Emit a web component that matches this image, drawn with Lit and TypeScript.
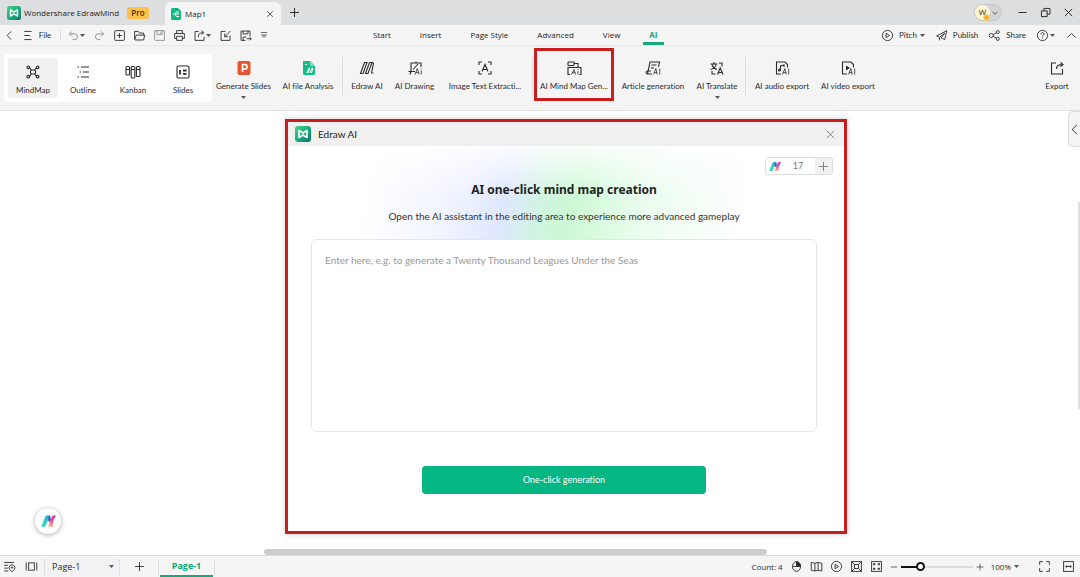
import { LitElement, html, svg, css, nothing } from "lit";
import { customElement, property } from "lit/decorators.js";

const icons: Record<string, unknown> = {
  back: svg`<path d="M10 3 5 8l5 5"/>`,
  menu: svg`<path d="M4 3h9M4 8h7M4 13h9"/>`,
  undo: svg`<path d="M6 3 3 6l3 3M3 6h6.500a3.500 3.500 0 0 1 0 7H7"/>`,
  redo: svg`<path d="m10 3 3 3-3 3M13 6H6.500a3.500 3.500 0 0 0 0 7H9"/>`,
  add: svg`<rect x="2" y="2" width="12" height="12" rx="1"/><path d="M8 5v6M5 8h6"/>`,
  folder: svg`<path d="M2 13V3h4.500l1.500 2h5v2.500M2 13l2-5.500h10.500L13 13.500H2.500"/>`,
  save: svg`<path d="M2 2h12v12H3l-1-1zM5 2v5h6V2M9 4v1.500"/>`,
  print: svg`<path d="M4.500 5.500V2h7v3.500M4.500 11.500H2v-6h12v6h-2.500M4.500 9h7v5h-7z"/>`,
  exportBox: svg`<path d="M7 3H2.500v11h11V9.500M6.500 10c0-4 2-5.500 6-5.500M10.500 2l3 2.500-3 2.500"/>`,
  importBox: svg`<path d="M8 3H2.500v11h11V8M14 2.500 7 9.500M7 5.500v4h4"/>`,
  saveAs: svg`<path d="M8 14H2.500V2.500h11V9M5 2.500V6h6V2.500M5 14v-4h4M9.500 12H15M13 10l2 2-2 2"/>`,
  more: svg`<path d="M3 4h10M4 8 8 11.500 12 8z"/>`,
  play: svg`<circle cx="8" cy="8" r="6.300"/><path d="M6.300 5.300v5.400L10.500 8z"/>`,
  publish: svg`<path d="M14.500 2 2 8.500l3.500 1.800L12 5l-4.500 6 4.500 2zM5.500 10.500V14"/>`,
  share: svg`<circle cx="4" cy="8" r="2.500"/><circle cx="12" cy="3.800" r="1.900"/><circle cx="12" cy="12.200" r="1.900"/><path d="m6.300 7 4-2.300M6.300 9l4 2.300"/>`,
  help: svg`<circle cx="8" cy="8" r="6.300"/><path d="M6 6.500C6 4 10 4 10 6.300 10 7.800 8 7.500 8 9.200M8 10.500v1.300"/>`,
  up: svg`<path d="m3 10.500 5-5 5 5"/>`,
  down: svg`<path d="m4 6 4 4 4-4"/>`,
  minus: svg`<path d="M3 8h10"/>`,
  plus: svg`<path d="M8 2.500v11M2.500 8h11"/>`,
  restore: svg`<path d="M3 6h7v7H3zM6 6V3h7.500v7H10"/>`,
  close: svg`<path d="m3.500 3.500 9 9M12.500 3.500l-9 9"/>`,
  mindmap: svg`<rect x="5.500" y="6" width="5" height="4" rx="1"/><circle cx="3.300" cy="3.300" r="1.300"/><circle cx="12.700" cy="3.300" r="1.300"/><circle cx="3.300" cy="12.700" r="1.300"/><circle cx="12.700" cy="12.700" r="1.300"/><path d="M4.500 3.500 6.500 6M11.500 3.500 9.500 6M4.500 12.500 6.500 10M11.500 12.500 9.500 10"/>`,
  outline: svg`<path d="M2.500 3h1.500M6 3h8M4.500 8H6M8 8h6M2.500 13h1.500M6 13h8"/>`,
  kanban: svg`<rect x="1" y="2.500" width="3.600" height="8.500" rx="1"/><rect x="6.200" y="2.500" width="3.600" height="11.500" rx="1"/><rect x="11.400" y="2.500" width="3.600" height="10" rx="1"/><path d="M1 5.500h3.500M6.200 5.500h3.500M11.400 5.500H15"/>`,
  slides: svg`<rect x="2" y="2" width="12" height="12" rx="1.500"/><path stroke-width="1.800" d="M5 6v4.500M8 6.500h3.500M8 9.800h3.500"/>`,
  edraw: svg`<path d="M1.500 13.500 5.500 2.500H8L4 13.500zM6.500 13.500 10.500 2.500H13L9 13.500zM13 2.500l1.500.5-2 10.500M14 12.500v1"/>`,
  drawing: svg`<path d="M8 11.500H4V3h10v4M9 1.500V3M1.500 11.500H4L3 14.500M6 9.500l5-5.500"/><path class="ai" d="m8 14.500 2.300-6 1.700 6M8.800 12.600h2.800M14.200 10.500v4M14.200 8.500v1"/>`,
  extract: svg`<path d="M5 2H2v3M11 2h3v3M5 14H2v-3M11 14h3v-3M5 11.500 8 4.500l3 7M6 9.500h4"/>`,
  mapgen: svg`<rect x="2" y="2" width="6" height="3.500" rx=".5"/><path d="M8 3.500h4v4M4 14.500H2v-7h13v7h-1.500"/><path class="ai" d="m5.500 14.500 2.500-5 1.500 5M6.500 12.800h2.800M12 11v3.500M12 9v1"/>`,
  article: svg`<path d="M7 14H2.500L5 2h9.500l-1 5M2.500 14c-2 0-1.500-3 0-3H6M6.500 5h5M6 8h3"/><path class="ai" d="m8.500 14.500 2.300-6 1.500 6M9.300 12.600h2.800M14.700 8.500v6"/>`,
  translate: svg`<path d="M1.500 4h7M5 2v2M3 4.500c.5 2 2.500 4 5 5M7 4.500C6.500 7 4 9 1.500 9.500M10 3h3v3.500M3 11v3h3.500M8.500 14.500 11.200 8l2.800 6.500M9.500 12.500H13"/>`,
  audio: svg`<path d="M7 14H2.500V2H11l2.500 2.500v3M6.500 10V6L10 5v2"/><circle cx="5.500" cy="10" r="1"/><path class="ai" d="m8.500 14.500 2.300-6 1.500 6M9.300 12.600h2.800M14.700 8.500v6"/>`,
  video: svg`<path d="M7 14H2.500V2H11l2.500 2.500v3"/><path fill="currentColor" stroke="none" d="M6 5.500v5L10 8z"/><path class="ai" d="m8.500 14.500 2.300-6 1.500 6M9.300 12.600h2.800M14.700 8.500v6"/>`,
  exportBig: svg`<path d="M7 3H2.500v11h11V9M7.500 9c0-3 1.500-4.500 6-4.500M11.500 2.500l2.500 2-2.500 2"/>`,
  left: svg`<path d="m11 2.500-6 5.500 6 5.500"/>`,
  find: svg`<path d="M1.500 3h12M1.500 6.500h4.500M1.500 10h4.500M1.500 13.500h5"/><path d="M11 14.500 8 11.500a3.600 3.600 0 1 1 6 0z"/><circle cx="11" cy="9.300" r=".9"/>`,
  frame: svg`<rect x="4.500" y="3.500" width="7" height="9"/><path d="M1.500 3v10M14.500 3v10"/>`,
  mouse: svg`<ellipse cx="8" cy="8" rx="5" ry="6"/><path fill="currentColor" d="M8 2v6h5C13 5 11 2 8 2z"/><path d="M3 8h5"/>`,
  book: svg`<path d="M1.500 3 6 4l4-1 4.500 1v9.500l-4.500-1-4 1-4.500-1zM6 4v9.500M10 3v9.500"/>`,
  fitBox: svg`<rect x="2" y="2" width="12" height="12"/><rect x="5.500" y="5.500" width="5" height="5"/><path d="m2 2 3.500 3.500M14 2l-3.500 3.500M2 14l3.500-3.500M14 14l-3.500-3.500"/>`,
  expandBox: svg`<rect x="2" y="2" width="12" height="12"/><path stroke-width="1.800" d="M4.800 6.500V4.800h1.700M9.500 4.800h1.700v1.700M4.800 9.500v1.700h1.700M9.500 11.200h1.700V9.500"/>`,
  full: svg`<path d="M6 2H2v4M10 2h4v4M6 14H2v-4M10 14h4v-4"/>`,
  width: svg`<rect x="2" y="2" width="12" height="12"/><path d="M4.500 8h7M6 6.500 4.500 8 6 9.500M10 6.500 11.500 8 10 9.500"/>`,
};

const icon = (name: string, cls = "") => html`<svg class="icon ${cls}" viewBox="0 0 16 16" aria-hidden="true">${icons[name]}</svg>`;
const caret = html`<svg class="caret" viewBox="0 0 5 3" aria-hidden="true"><path d="M0 0h5L2.500 3z"/></svg>`;

const logo = html`<svg class="logo" viewBox="0 0 16 16" aria-hidden="true">
  <defs><linearGradient id="lg" x1="0" y1="0" x2="1" y2="1"><stop offset="0" stop-color="#43cf88"/><stop offset=".5" stop-color="#1fae7d"/><stop offset="1" stop-color="#07736f"/></linearGradient></defs>
  <rect width="16" height="16" rx="3" fill="url(#lg)"/>
  <path d="M4 4.500v7l4-2.500 4 2.500v-7L8 7z" fill="none" stroke="#fff" stroke-width="1.600" stroke-linejoin="round"/>
</svg>`;

const spark = html`<svg class="spark" viewBox="0 0 16 12" aria-hidden="true">
  <defs>
    <linearGradient id="sa" x1="1" y1="0" x2="0" y2="1"><stop offset="0" stop-color="#2c8fd8"/><stop offset=".5" stop-color="#30cfc8"/><stop offset="1" stop-color="#3fe0c0"/></linearGradient>
    <linearGradient id="sb" x1=".7" y1="0" x2=".3" y2="1"><stop offset="0" stop-color="#dd2fa4"/><stop offset=".5" stop-color="#e8508f"/><stop offset="1" stop-color="#fbb98c"/></linearGradient>
  </defs>
  <path d="M0 12 4.500 1.500Q5 0 7 0h2.500L5 11q-.5 1-1.500 1z" fill="url(#sa)"/>
  <path d="M7.500 12 11.500 1.500Q12 0 13.500 0H16l-3 6-.5 6z" fill="url(#sb)"/>
  <path d="M7.500 3.500 9 0h.8L10.500 4 9.500 7 7.800 6z" fill="#4458b8"/>
</svg>`;

const base = css`
  * { box-sizing: border-box; }
  button, select, input, textarea { font: inherit; color: inherit; margin: 0; padding: 0; border: 0; background: none; }
  button { display: flex; align-items: center; justify-content: center; white-space: nowrap; }
  .icon { width: 13px; height: 13px; flex: none; fill: none; stroke: currentColor; stroke-width: 1.1; }
  .icon.small { width: 10px; height: 10px; }
  .icon.large { width: 16px; height: 16px; }
  .icon .ai { stroke-width: 0.8; }
  .caret { width: 5px; height: 3px; flex: none; fill: #555; }
  .logo { width: 14px; height: 14px; flex: none; }
  .spark { width: 12px; height: 9px; flex: none; }
`;

@customElement("ribbon-button")
export class RibbonButton extends LitElement {
  @property() label = "";
  @property() icon = "";
  @property({ type: Boolean }) drop = false;

  static styles = [base, css`
    :host { display: block; }
    button { width: 100%; height: 100%; flex-direction: column; justify-content: flex-start; gap: 4px; line-height: 12px; }
    .badge { width: 16px; height: 16px; }
    .mark { height: 4px; margin-top: -1px; display: flex; align-items: center; }
  `];

  private glyph() {
    if (this.icon === "ppt") {
      return html`<svg class="badge" viewBox="0 0 16 16" aria-hidden="true"><rect x="1.500" y="1" width="13" height="14" rx="2" fill="#e4572e"/><path d="M6.500 12V4.500h2.300a2.300 2.300 0 0 1 0 4.600H6.500" fill="none" stroke="#fff" stroke-width="1.600"/></svg>`;
    }
    if (this.icon === "file") {
      return html`<svg class="badge" viewBox="0 0 16 16" aria-hidden="true"><path d="M3.500 1H10l5 5v7.500a1.500 1.500 0 0 1-1.500 1.500h-9A1.500 1.500 0 0 1 3 13.500v-11A1.500 1.500 0 0 1 3.500 1z" fill="#14bd86"/><path d="M10 1l5 5h-5z" fill="#7adfbb"/><path d="M5 4.500h2M7 13l2-5h1l-2 5M10 13l2-5h1l-1.500 5" stroke="#fff" fill="none"/></svg>`;
    }
    return icon(this.icon, "large");
  }

  render() {
    return html`<button type="button">${this.glyph()}<span>${this.label}</span>${this.drop ? html`<span class="mark">${caret}</span>` : nothing}</button>`;
  }
}

@customElement("ai-dialog")
export class AiDialog extends LitElement {
  static styles = [base, css`
    :host { display: block; border: 3px solid #c81e1e; background: #fff; box-shadow: 0 0 6px #0003; color: #222; }
    .head { height: 24px; display: flex; align-items: center; gap: 7px; padding: 0 7px; background: #f0f0f0; font-size: 10px; }
    .head .logo { width: 16px; height: 16px; }
    .head button { margin-left: auto; color: #777; }
    .body { padding: 0 27px 37px 23px; }
    .hero {
      height: 93px; display: flex; flex-direction: column; align-items: center;
      background:
        linear-gradient(#ffffffe0, #fff0 55%),
        linear-gradient(100deg, #fff0 12%, #e4eaff80 28%, #dfe7ff 39%, #d0f5e0 46%, #ccf9d4 52%, #dcfbe290 66%, #fff0 86%);
    }
    .credits { align-self: flex-end; margin: 11px -16px 0 0; width: 68px; height: 18px; display: flex; align-items: center; border: 1px solid #ddd; border-radius: 3px; background: #fff; font-size: 9px; color: #777; padding-left: 3px; }
    .credits output { flex: 1; text-align: center; }
    .credits button { width: 17px; height: 16px; background: #f0f0f0; }
    h1 { margin: 6px 0 0; font-family: "Noto Sans", sans-serif; font-size: 12px; line-height: 18px; font-weight: 700; color: #1e2423; }
    p { margin: 10px 0 0; font-size: 10px; line-height: 14px; color: #333; }
    textarea { display: block; width: 100%; height: 193px; resize: none; padding: 13px; border: 1px solid #e4e6e8; border-radius: 6px; background: #fff; font-size: 10px; line-height: 14px; outline: none; }
    textarea::placeholder { color: #999; opacity: 1; }
    .go { width: 284px; max-width: 100%; height: 28px; margin: 34px auto 0; border-radius: 4px; background: #04b681; color: #fff; font-size: 9px; }
  `];

  render() {
    return html`
      <div class="head">${logo}<span>Edraw AI</span><button type="button" aria-label="Close">${icon("close")}</button></div>
      <div class="body">
        <div class="hero">
          <div class="credits">${spark}<output>17</output><button type="button" aria-label="Add credits">${icon("plus")}</button></div>
          <h1>AI one-click mind map creation</h1>
          <p>Open the AI assistant in the editing area to experience more advanced gameplay</p>
        </div>
        <textarea aria-label="Prompt" placeholder="Enter here, e.g. to generate a Twenty Thousand Leagues Under the Seas"></textarea>
        <button type="button" class="go">One-click generation</button>
      </div>`;
  }
}

@customElement("app-root")
export class AppRoot extends LitElement {
  static styles = [base, css`
    :host { display: flex; flex-direction: column; height: 100vh; overflow: hidden; background: #fff; color: #2b2b2b; font: 8px/12px Lato, "Open Sans", sans-serif; font-variant-ligatures: none; }
    .titlebar, .tabs, .status { font-family: "Open Sans", sans-serif; }
    .titlebar { height: 25px; flex: none; display: flex; align-items: center; background: #dcdee0; padding-left: 7px; color: #1c1c1c; }
    .brand { width: 158px; display: flex; align-items: center; gap: 3px; white-space: nowrap; }
    .pro { margin-left: auto; margin-right: 16px; width: 22px; border-radius: 3px; background: #fbc14d; color: #4b2e00; text-align: center; font-weight: 600; }
    .doc { width: 116px; height: 23px; align-self: flex-end; display: flex; align-items: center; gap: 4px; padding: 0 6px; border-radius: 6px 6px 0 0; background: #f5f5f5; }
    .doc svg.file { width: 10px; height: 12px; }
    .doc button { margin-left: auto; }
    .newtab { width: 27px; }
    .win { margin-left: auto; display: flex; align-items: center; }
    .win > button { width: 23px; height: 20px; }
    .account { margin-right: 9px; height: 17px; display: flex; align-items: center; border: 1px solid #c4c6c8; border-radius: 9px; background: #d2d4d6; padding-right: 1px; }
    .avatar { position: relative; width: 15px; height: 15px; border-radius: 50%; background: #fff6d2; text-align: center; line-height: 14px; }
    .avatar i { position: absolute; right: 0; bottom: -1px; width: 7px; height: 7px; border-radius: 50%; background: #f3ae25; border: 1px solid #fbd98a; }
    .menubar { height: 21px; flex: none; display: flex; align-items: center; background: #f5f5f5; border-bottom: 1px solid #e6e6e6; }
    .quick { width: 373px; display: flex; align-items: center; }
    .quick button { width: 20px; height: 18px; }
    .quick .nav { width: 18px; }
    .quick .wide { width: 26px; }
    .quick .gap { margin: 0 2px 0 6px; }
    .quick .dim { color: #888; }
    .rule { width: 1px; height: 10px; flex: none; background: #ddd; }
    .tabs { display: flex; gap: 29px; height: 20px; }
    .tabs button { border-bottom: 3px solid transparent; padding-top: 3px; height: 20px; color: #222; }
    .tabs .on { color: #0ea876; font-weight: 700; border-color: #18a97a; padding: 3px 6px 0; margin: 0 -6px; }
    .actions { margin-left: auto; display: flex; align-items: center; gap: 10px; padding-right: 2px; }
    .actions button { gap: 5px; }
    .actions span + .caret { margin-left: -2px; }
    .actions .tight { gap: 1px; }
    .ribbon { height: 65px; flex: none; display: grid; grid-template-columns: 208px 63px 66px 3px 46px 49px 92px 3px 80px 78px 50px 7px 66px 66px 1fr; padding: 2px 6px 8px 4px; background: #f4f4f4; border-bottom: 1px solid #e2e2e2; }
    .ribbon .rule { height: 38px; margin: 9px auto 0; }
    .ribbon > ribbon-button { height: 53px; padding-top: 12px; }
    .modes { margin-top: 6px; height: 48px; display: flex; padding: 4px; border-radius: 4px; background: #fff; }
    .modes ribbon-button { width: 50px; height: 40px; padding-top: 6px; border-radius: 3px; }
    .modes .on { background: #f1f1f1; }
    .marked { outline: 3px solid #c81e1e; outline-offset: -3px; }
    .ribbon > .last { justify-self: end; width: 34px; }
    .canvas { position: relative; flex: 1; min-height: 0; display: flex; flex-direction: column; }
    .stage { flex: 1; display: flex; justify-content: center; align-items: flex-start; padding: 8px 0 0 52px; }
    ai-dialog { width: 562px; }
    .handle { position: absolute; right: 0; top: 0; width: 12px; height: 36px; border: 1px solid #ddd; border-right: 0; border-radius: 5px 0 0 5px; background: #f4f4f4; }
    .vbar { position: absolute; right: 0; top: 91px; width: 2px; height: 207px; background: #dedede; }
    .helper { position: absolute; left: 35px; bottom: 21px; width: 26px; height: 26px; border-radius: 50%; background: #fff; box-shadow: 0 1px 5px #0005; }
    .helper .spark { width: 15px; height: 12px; }
    .hbar { width: 503px; height: 6px; margin-left: 264px; border-radius: 3px; background: #cdcdcf; flex: none; }
    .status { height: 22px; flex: none; display: flex; align-items: center; border-top: 1px solid #dedede; background: #f5f5f5; }
    .status .rule { height: 16px; }
    .status button { height: 20px; }
    .status .first { width: 18px; }
    .status .second { width: 26px; }
    .pages { position: relative; width: 74px; display: flex; align-items: center; }
    .pages select { width: 100%; height: 18px; padding-left: 7px; appearance: none; background: #f2f2f4; font-size: 9px; }
    .pages .caret { position: absolute; right: 5px; }
    .status .new { width: 38px; }
    .status .sheet { width: 53px; margin: 0 1px; border-bottom: 2px solid #18a97a; color: #0ea876; font-size: 9px; font-weight: 700; }
    .right { margin-left: auto; display: flex; align-items: center; }
    .right .tool { width: 20px; }
    .right .step { width: 14px; }
    .count { margin-right: 4px; }
    .zoom { width: 72px; height: 12px; appearance: none; }
    .zoom::-webkit-slider-runnable-track { height: 2px; background: linear-gradient(90deg, #111 25%, #ddd 25%); }
    .zoom::-webkit-slider-thumb { appearance: none; width: 9px; height: 9px; margin-top: -4px; border: 2px solid #111; border-radius: 50%; background: #fff; }
    .percent { gap: 3px; margin: 0 13px 0 4px; }
    .right .edge { width: 24px; }
  `];

  private rb(name: string, label: string, cls = "", drop = false) {
    return html`<ribbon-button class=${cls} icon=${name} label=${label} ?drop=${drop}></ribbon-button>`;
  }

  private tool(name: string, label: string, cls = "tool", drop = false) {
    return html`<button type="button" class=${cls} aria-label=${label}>${icon(name)}${drop ? caret : nothing}</button>`;
  }

  render() {
    return html`
      <header class="titlebar">
        <div class="brand">${logo}<span>Wondershare EdrawMind</span><span class="pro">Pro</span></div>
        <div class="doc">
          <svg class="file" viewBox="0 0 10 12" aria-hidden="true"><path d="M1.500 0H7l3 3v7.500A1.500 1.500 0 0 1 8.500 12h-7A1.500 1.500 0 0 1 0 10.500v-9A1.500 1.500 0 0 1 1.500 0z" fill="#10b981"/><path d="M2 6h2.500M8 4H5.500Q4.500 4 4.500 6t1 2.500H8M4.500 6H8" stroke="#fff" fill="none"/></svg>
          <span>Map1</span>
          <button type="button" aria-label="Close tab">${icon("close", "small")}</button>
        </div>
        <button type="button" class="newtab" aria-label="New tab">${icon("plus")}</button>
        <div class="win">
          <div class="account"><span class="avatar">W<i></i></span>${icon("down", "small")}</div>
          ${this.tool("minus", "Minimize", "")}${this.tool("restore", "Restore", "")}${this.tool("close", "Close", "")}
        </div>
      </header>

      <nav class="menubar">
        <div class="quick">
          ${this.tool("back", "Back", "nav")}${this.tool("menu", "Menu", "nav")}
          <button type="button" class="nav">File</button><span class="rule gap"></span>
          ${this.tool("undo", "Undo", "wide dim", true)}${this.tool("redo", "Redo", "dim")}
          ${this.tool("add", "New", "")}${this.tool("folder", "Open", "")}${this.tool("save", "Save", "dim")}${this.tool("print", "Print", "")}
          ${this.tool("exportBox", "Export", "wide", true)}${this.tool("importBox", "Import", "")}${this.tool("saveAs", "Save as", "")}
          <button type="button" class="nav" aria-label="More">${icon("more", "small")}</button>
        </div>
        <div class="tabs">
          ${["Start", "Insert", "Page Style", "Advanced", "View", "AI"].map((t) => html`<button type="button" class=${t === "AI" ? "on" : ""}>${t}</button>`)}
        </div>
        <div class="actions">
          <button type="button">${icon("play")}<span>Pitch</span>${caret}</button>
          <button type="button">${icon("publish")}<span>Publish</span></button>
          <button type="button">${icon("share")}<span>Share</span></button>
          <button type="button" class="tight" aria-label="Help">${icon("help")}${caret}</button>
          <button type="button" aria-label="Collapse ribbon">${icon("up")}</button>
        </div>
      </nav>

      <section class="ribbon">
        <div class="modes">
          ${this.rb("mindmap", "MindMap", "on")}${this.rb("outline", "Outline")}${this.rb("kanban", "Kanban")}${this.rb("slides", "Slides")}
        </div>
        ${this.rb("ppt", "Generate Slides", "", true)}${this.rb("file", "AI file Analysis")}
        <span class="rule"></span>
        ${this.rb("edraw", "Edraw AI")}${this.rb("drawing", "AI Drawing")}${this.rb("extract", "Image Text Extracti...")}
        <span class="rule"></span>
        ${this.rb("mapgen", "AI Mind Map Gen...", "marked")}${this.rb("article", "Article generation")}${this.rb("translate", "AI Translate", "", true)}
        <span class="rule"></span>
        ${this.rb("audio", "AI audio export")}${this.rb("video", "AI video export")}
        ${this.rb("exportBig", "Export", "last")}
      </section>

      <main class="canvas">
        <div class="stage"><ai-dialog></ai-dialog></div>
        <div class="hbar"></div>
        <button type="button" class="handle" aria-label="Open panel">${icon("left")}</button>
        <div class="vbar"></div>
        <button type="button" class="helper" aria-label="AI assistant">${spark}</button>
      </main>

      <footer class="status">
        ${this.tool("find", "Find", "first")}${this.tool("frame", "Frame", "second")}
        <span class="rule"></span>
        <div class="pages"><select aria-label="Page"><option>Page-1</option></select>${caret}</div>
        <span class="rule"></span>
        ${this.tool("plus", "Add page", "new")}
        <span class="rule"></span>
        <button type="button" class="sheet">Page-1</button>
        <span class="rule"></span>
        <div class="right">
          <span class="count">Count: 4</span>
          ${this.tool("mouse", "Mouse mode")}${this.tool("book", "Map view")}${this.tool("play", "Present")}${this.tool("fitBox", "Fit page")}${this.tool("expandBox", "Expand")}
          <button type="button" class="step" aria-label="Zoom out">${icon("minus", "small")}</button>
          <input class="zoom" type="range" min="0" max="100" value="24" aria-label="Zoom" />
          <button type="button" class="step" aria-label="Zoom in">${icon("plus", "small")}</button>
          <button type="button" class="percent">100%${caret}</button>
          ${this.tool("full", "Full screen", "tool edge")}${this.tool("width", "Fit width", "tool edge")}
        </div>
      </footer>`;
  }
}
